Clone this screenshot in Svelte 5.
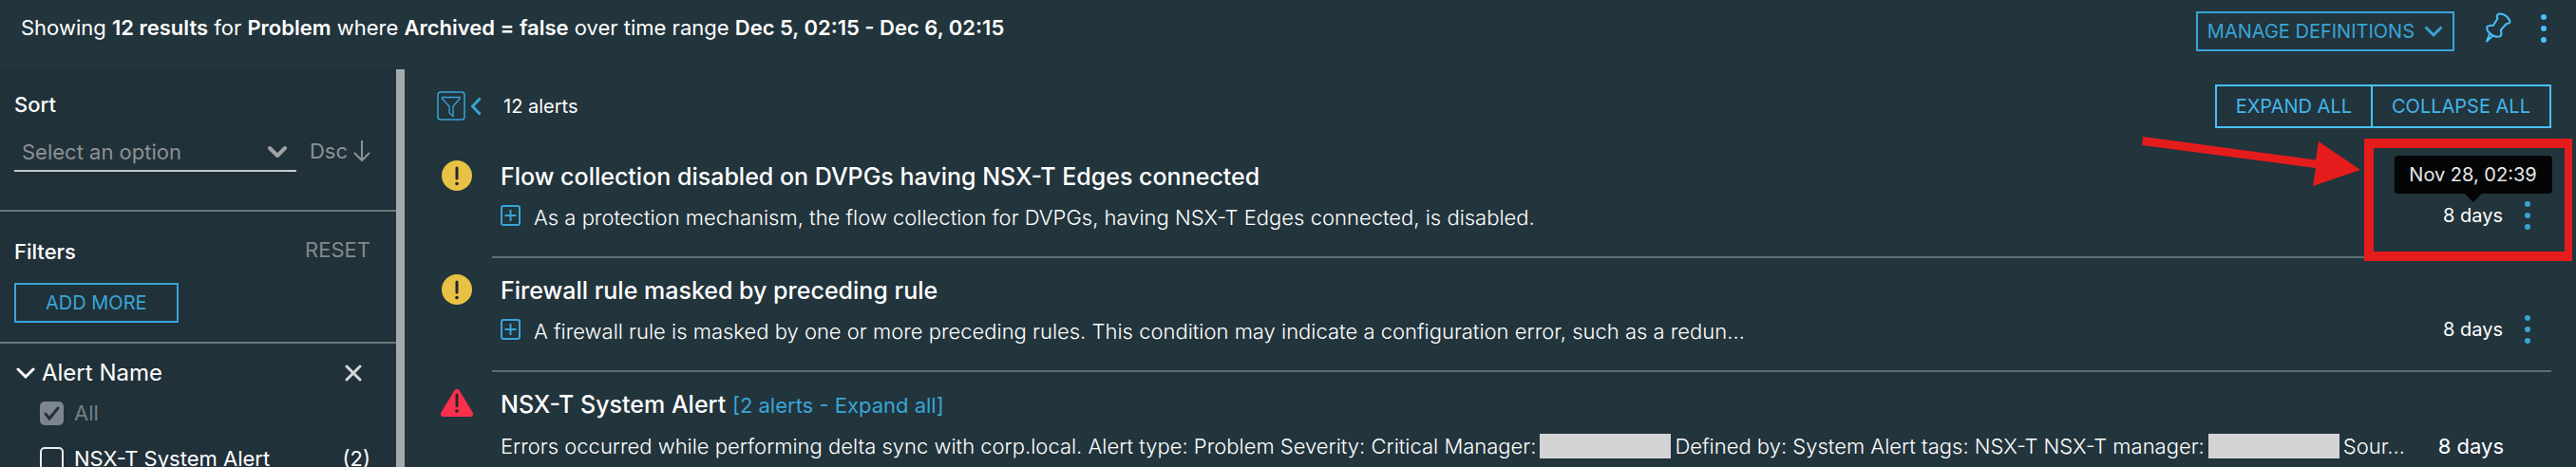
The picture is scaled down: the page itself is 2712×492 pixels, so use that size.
<script>
  let sortBy = $state('');
  let allAlerts = $state(true);
  let systemAlert = $state(false);

  const alerts = [
    {
      level: 'warning',
      title: 'Flow collection disabled on DVPGs having NSX-T Edges connected',
      expandable: true,
      parts: ['As a protection mechanism, the flow collection for DVPGs, having NSX-T Edges connected, is disabled.'],
      age: '8 days',
      date: 'Nov 28, 02:39',
      menu: true
    },
    {
      level: 'warning',
      title: 'Firewall rule masked by preceding rule',
      expandable: true,
      parts: ['A firewall rule is masked by one or more preceding rules. This condition may indicate a configuration error, such as a redun…'],
      age: '8 days',
      menu: true
    },
    {
      level: 'critical',
      title: 'NSX-T System Alert',
      link: '[2 alerts - Expand all]',
      parts: [
        'Errors occurred while performing delta sync with corp.local. Alert type: Problem Severity: Critical Manager:',
        'Defined by: System Alert tags: NSX-T NSX-T manager:',
        'Sour…'
      ],
      age: '8 days'
    }
  ];
</script>

{#snippet dots()}
  <svg class="dots" width="8" height="32" viewBox="0 0 8 32" fill="currentColor" aria-hidden="true">
    <circle cx="4" cy="4" r="3" /><circle cx="4" cy="16" r="3" /><circle cx="4" cy="28" r="3" />
  </svg>
{/snippet}

<div class="page">
  <header>
    <p class="summary">
      Showing <b>12 results</b> for <b>Problem</b> where <b>Archived = false</b> over time range <b>Dec 5, 02:15 - Dec 6, 02:15</b>
    </p>
    <button class="manage">
      MANAGE DEFINITIONS
      <svg width="20" height="14" viewBox="0 0 20 14" fill="none" stroke="currentColor" stroke-width="3" aria-hidden="true"><path d="M1.500 2.500 10 11l8.500-8.500" /></svg>
    </button>
    <button class="icon pin" aria-label="Pin">
      <svg width="28" height="32" viewBox="0 0 28 32" fill="none" stroke="currentColor" stroke-width="2" stroke-linejoin="round" stroke-linecap="round" aria-hidden="true">
        <path d="M13.500 2.500C15 1 17 1.200 19.500 2.200c3 1.300 5.500 3.800 6.700 6.300.6 1.500 0 3-1.700 3.300l-1.700.2-6 6.600c1 2.500.8 4.500-.3 6.500-2.500.8-5.500.7-8-.6L2 30.500l3.300-8.500c-2.600-1.600-3.300-4-3-6.800 1.700-1.200 4-1.700 6.500-1.200l4.600-7.500c-.8-1.400-.8-3 .1-4z" />
        <path d="M5.300 22 8.500 24.500" />
      </svg>
    </button>
    <button class="icon more" aria-label="More options">{@render dots()}</button>
  </header>

  <div class="columns">
    <aside>
      <section class="sort">
        <h2><label for="sort">Sort</label></h2>
        <div class="sort-row">
          <div class="select">
            <select id="sort" bind:value={sortBy}>
              <option value="">Select an option</option>
            </select>
            <svg width="22" height="16" viewBox="0 0 22 16" fill="none" stroke="currentColor" stroke-width="4" stroke-linecap="round" stroke-linejoin="round" aria-hidden="true"><path d="m3 4 8 8 8-8" /></svg>
          </div>
          <button class="direction">
            Dsc
            <svg width="18" height="24" viewBox="0 0 18 24" fill="none" stroke="currentColor" stroke-width="2" aria-hidden="true"><path d="M9 1v21M1 14l8 8 8-8" /></svg>
          </button>
        </div>
      </section>

      <section class="filters">
        <div class="filters-head">
          <h2>Filters</h2>
          <button class="reset">RESET</button>
        </div>
        <button class="add">ADD MORE</button>
      </section>

      <section class="group">
        <div class="group-head">
          <svg width="20" height="14" viewBox="0 0 20 14" fill="none" stroke="currentColor" stroke-width="3" stroke-linecap="round" aria-hidden="true"><path d="m2 3 8 8 8-8" /></svg>
          <h3>Alert Name</h3>
          <button class="icon close" aria-label="Remove filter">
            <svg width="18" height="18" viewBox="0 0 18 18" fill="none" stroke="currentColor" stroke-width="3" stroke-linecap="round" aria-hidden="true"><path d="m2 2 14 14M16 2 2 16" /></svg>
          </button>
        </div>
        <label class="choice off">
          <input type="checkbox" bind:checked={allAlerts} disabled />
          <span>All</span>
        </label>
        <label class="choice">
          <input type="checkbox" bind:checked={systemAlert} />
          <span>NSX-T System Alert</span>
          <span class="count">(2)</span>
        </label>
      </section>
    </aside>

    <main>
      <div class="toolbar">
        <button class="icon toggle" aria-label="Hide filters">
          <svg width="48" height="32" viewBox="0 0 48 32" fill="none" stroke="currentColor" aria-hidden="true">
            <rect x="1" y="1" width="28" height="29" rx="3" stroke-width="1.500" />
            <path d="M5.500 6.500h18.500v1.500l-7 8v10.500l-4-3.500v-7l-7.500-8z" stroke-width="1.300" />
            <path d="m45.500 7.500-8 8.500 8 8.500" stroke-width="3" />
          </svg>
        </button>
        <p class="total">12 alerts</p>
        <div class="pair">
          <button>EXPAND ALL</button>
          <button>COLLAPSE ALL</button>
        </div>
      </div>

      {#each alerts as alert}
        <article>
          <div class="level">
            {#if alert.level === 'warning'}
              <svg width="34" height="34" viewBox="0 0 34 34" role="img" aria-label="Warning">
                <circle cx="17" cy="17" r="16" fill="#e7c244" />
                <path d="M17 9v11" stroke="#22282a" stroke-width="3" stroke-linecap="round" />
                <circle cx="17" cy="25.500" r="1.800" fill="#22282a" />
              </svg>
            {:else}
              <svg width="34" height="34" viewBox="0 0 34 34" role="img" aria-label="Critical">
                <path d="M14.200 3.400a3.200 3.200 0 0 1 5.600 0L33.600 26.600c1.200 2.200 0 4.400-2.600 4.400H3C.4 31-.8 28.800.4 26.600z" fill="#f92f4c" />
                <path d="M17 8v11.500" stroke="#22282a" stroke-width="3" stroke-linecap="round" />
                <circle cx="17" cy="25" r="1.800" fill="#22282a" />
              </svg>
            {/if}
          </div>
          <div class="body">
            <div class="text">
              <h3>{alert.title} {#if alert.link}<a href="#expand">{alert.link}</a>{/if}</h3>
              <div class="detail">
                {#if alert.expandable}
                  <button class="icon plus" aria-label="Expand">
                    <svg width="22" height="22" viewBox="0 0 22 22" fill="none" stroke="currentColor" stroke-width="2" aria-hidden="true">
                      <rect x="1" y="1" width="19" height="20" rx="2" /><path d="M4.500 11h12M10.500 5v12" />
                    </svg>
                  </button>
                {/if}
                {#each alert.parts as part, i}
                  {#if i > 0}<span class="redacted"></span>{/if}
                  <span>{part}</span>
                {/each}
              </div>
            </div>
            <div class="side" class:tall={!alert.menu}>
              <span class="age">
                {alert.age}
                {#if alert.date}<span class="tip" role="tooltip">{alert.date}</span>{/if}
              </span>
              {#if alert.menu}
                <button class="icon kebab" aria-label="Alert actions">{@render dots()}</button>
              {/if}
            </div>
          </div>
          {#if alert.date}
            <div class="callout"></div>
            <svg class="arrow" width="232" height="56" viewBox="0 0 232 56" aria-hidden="true">
              <path d="M2 1 184 25.500 187 6l44 30-50 17 3-19L1 10z" fill="#e51c1c" />
            </svg>
          {/if}
        </article>
      {/each}
    </main>
  </div>
</div>

<style>
  :global(body) { background: #22343c; }
  .page {
    display: flex;
    flex-direction: column;
    height: 100vh;
    overflow: hidden;
    background: #22343c;
    color: #fff;
    font: 400 20px/32px Inter, "Noto Sans", sans-serif;
  }
  .page :is(h2, h3, p) { margin: 0; font-weight: 500; }
  button, select {
    margin: 0;
    padding: 0;
    border: 0;
    background: none;
    color: #39a5d6;
    font: inherit;
    cursor: pointer;
  }
  svg { display: block; flex: none; }
  .icon { display: flex; }

  header { display: flex; flex: none; align-items: flex-start; height: 73px; padding: 0 30px 0 22px; box-sizing: border-box; }
  .page .summary { margin: 13px auto 0 0; font-size: 22px; font-weight: 400; }
  .summary b { font-weight: 600; }
  .manage {
    display: flex;
    align-items: center;
    gap: 10px;
    height: 42px;
    margin-top: 12px;
    padding: 0 10px;
    border: 2px solid #39a5d6;
  }
  .pin { margin: 13px 0 0 32px; color: #49c1fb; }
  .more { margin: 14px 0 0 30px; color: #49c1fb; }

  .columns { display: flex; flex: 1; min-height: 0; }
  aside { flex: none; width: 417px; border-right: 9px solid #a3abae; background: #213139; overflow: hidden; }
  section { border-bottom: 2px solid #66777e; }
  h2 { font-size: 22px; }
  .sort { padding: 21px 27px 40px 15px; }
  .sort-row { display: flex; gap: 14px; margin-top: 15px; }
  .select { display: flex; align-items: center; width: 298px; height: 40px; border-bottom: 2px solid #c3c9cc; box-sizing: border-box; color: #a0a4a6; }
  .select svg { margin: 0 9px 0 -31px; pointer-events: none; }
  select { width: 100%; height: 38px; padding-left: 8px; appearance: none; color: #8b9296; font-size: 22px; outline: 0; }
  .direction { display: flex; align-items: center; gap: 6px; height: 36px; color: #8b9296; font-size: 22px; }
  .filters { padding: 26px 27px 20px 15px; }
  .filters-head { display: flex; justify-content: space-between; }
  .reset { color: #84898d; font-size: 22px; line-height: 28px; height: 28px; }
  .add { height: 42px; margin-top: 17px; padding: 0 31px; border: 2px solid #39a5d6; }
  .group { padding: 15px 27px 0 17px; border: 0; font-size: 22px; }
  .group-head { display: flex; align-items: center; gap: 7px; margin-bottom: 2px; }
  .page .group-head h3 { flex: 1; font-size: 24px; font-weight: 400; }
  .close { margin-right: 9px; color: #d5dadc; }
  .choice { display: flex; align-items: center; height: 48px; margin-left: 25px; }
  .choice input {
    flex: none;
    width: 25px;
    height: 25px;
    margin: 0 11px 0 0;
    border: 2px solid #e8ecee;
    border-radius: 5px;
    appearance: none;
  }
  .choice input:checked {
    border-color: #7c8591;
    background: #7c8591 url("data:image/svg+xml,%3Csvg xmlns='http://www.w3.org/2000/svg' viewBox='0 0 21 21'%3E%3Cpath d='m4 11 4 5 9-11' fill='none' stroke='%23292f33' stroke-width='3' stroke-linecap='round'/%3E%3C/svg%3E") center / 21px no-repeat;
  }
  .off { color: #72808a; }
  .count { margin-left: auto; }

  main { flex: 1; min-width: 0; padding: 16px 26px 0 34px; }
  .toolbar { display: flex; align-items: center; height: 46px; margin-bottom: 17px; }
  .page .total { margin: 0 auto 0 22px; font-weight: 400; }
  .pair { display: flex; height: 46px; }
  .pair button { padding: 0 20px; border: 2px solid #49c1fb; color: #43b4ea; }
  .pair button + button { margin-left: -2px; }

  article { position: relative; display: flex; }
  .level { flex: none; width: 58px; padding: 16px 0 0 4px; box-sizing: border-box; }
  .body { display: flex; flex: 1; align-items: flex-end; min-width: 0; padding: 18px 0 0 9px; border-bottom: 2px solid #5c6f76; }
  article:last-child .body { border: 0; }
  .text { flex: 1; min-width: 0; padding-bottom: 25px; }
  .page .text h3 { font-size: 25px; font-weight: 500; white-space: nowrap; }
  a { color: #39a5d6; font-size: 22px; font-weight: 400; text-decoration: none; }
  .detail { display: flex; align-items: center; margin-top: 11px; color: #fff; font-size: 22px; font-weight: 300; white-space: nowrap; }
  .plus { margin: 0 13px 4px 0; }
  .redacted { width: 138px; height: 26px; margin: 0 4px; background: #d3d4d6; }
  .side { display: flex; align-items: center; gap: 22px; padding: 0 21px 27px 0; }
  .side.tall { padding: 0 50px 25px 0; font-size: 22px; }
  .age { position: relative; white-space: nowrap; }
  .tip {
    position: absolute;
    bottom: 39px;
    left: 50%;
    padding: 4px 16px;
    border-radius: 4px;
    background: #040506;
    color: #e6e8e9;
    transform: translateX(-50%);
  }
  .tip::after {
    content: "";
    position: absolute;
    top: 100%;
    left: 50%;
    margin-left: -9px;
    border: 9px solid transparent;
    border-top-color: #040506;
    border-bottom: 0;
  }
  .callout { position: absolute; top: -6px; right: -22px; width: 219px; height: 129px; border: 10px solid #e51c1c; border-right-width: 8px; box-sizing: border-box; z-index: 1; pointer-events: none; }
  .arrow { position: absolute; top: -9px; right: 200px; }
</style>
